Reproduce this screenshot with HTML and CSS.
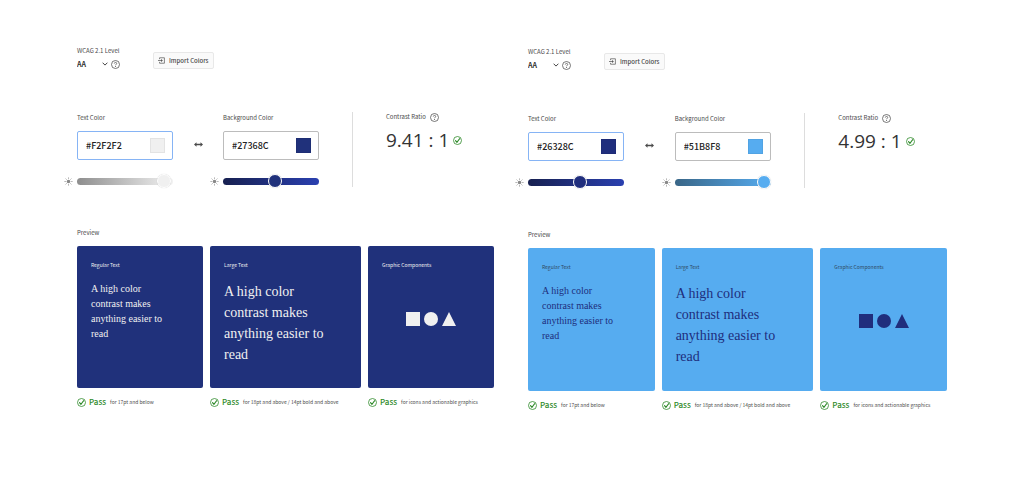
FILE: index.html
```html
<!DOCTYPE html>
<html lang="en">
<head>
<meta charset="utf-8">
<title>Contrast Checker</title>
<link rel="stylesheet" href="styles.css">
</head>
<body>
<svg class="sprite" aria-hidden="true">
  <symbol id="help" viewBox="0 0 18 18"><circle cx="9" cy="9" r="8" fill="none" stroke="currentColor" stroke-width="1.5"/><path d="M6.6 7.1C6.7 5.5 7.7 4.8 9 4.8c1.400 0 2.400.8 2.400 2 0 1.800-2.300 1.900-2.300 3.700" fill="none" stroke="currentColor" stroke-width="1.500"/><circle cx="9.100" cy="12.900" r="1" fill="currentColor"/></symbol>
  <symbol id="check" viewBox="0 0 18 18"><circle cx="9" cy="9" r="8" fill="none" stroke="currentColor" stroke-width="1.600"/><path d="M5 9.300l3 3.200 5.200-7" fill="none" stroke="currentColor" stroke-width="2.400" stroke-linecap="round" stroke-linejoin="round"/></symbol>
  <symbol id="sun" viewBox="0 0 18 18"><circle cx="9" cy="9" r="3.600" fill="currentColor"/><path d="M9 1v2.500M9 14.500V17M1 9h2.500M14.500 9H17M3.300 3.300l1.800 1.800M12.900 12.900l1.800 1.800M3.300 14.700l1.800-1.800M12.900 5.100l1.800-1.800" stroke="currentColor" stroke-width="1.600"/></symbol>
  <symbol id="swap" viewBox="0 0 18 10"><path d="M0 5l5-4.500V3.600h8V.5L18 5l-5 4.500V6.400H5v3.100z" fill="currentColor"/></symbol>
  <symbol id="import" viewBox="0 0 18 18"><path d="M4 5.500V2h12.500v14H4v-3.500" fill="none" stroke="currentColor" stroke-width="1.700"/><path d="M0 9h9" stroke="currentColor" stroke-width="1.800"/><path d="M8 5.300L12.300 9 8 12.700z" fill="currentColor"/></symbol>
  <symbol id="shapes" viewBox="0 0 50 14"><path d="M0 0h14v14H0zM43 0l7 14H36z" fill="currentColor"/><circle cx="25" cy="7" r="7" fill="currentColor"/></symbol>
</svg>

<main class="page">
  <section class="panel navy" aria-label="Navy background">
    <div class="toolbar">
      <div class="level">
        <label for="level-a">WCAG 2.1 Level</label>
        <div class="level-row">
          <select id="level-a"><option>AA</option><option>AAA</option></select>
          <button class="icon-button" aria-label="About levels"><svg class="help"><use href="#help"/></svg></button>
        </div>
      </div>
      <button class="import"><svg class="import-icon"><use href="#import"/></svg>Import Colors</button>
    </div>
    <div class="colors">
      <div class="picker">
        <label for="text-a">Text Color</label>
        <div class="field active"><input id="text-a" type="text" value="#F2F2F2"><button class="swatch text-fill" aria-label="Pick text color"></button></div>
        <div class="lightness"><svg class="sun"><use href="#sun"/></svg><input class="gray-track text-thumb" type="range" value="98" aria-label="Text lightness"></div>
      </div>
      <button class="icon-button swap" aria-label="Swap colors"><svg class="swap-icon"><use href="#swap"/></svg></button>
      <div class="picker">
        <label for="back-a">Background Color</label>
        <div class="field"><input id="back-a" type="text" value="#27368C"><button class="swatch back-fill" aria-label="Pick background color"></button></div>
        <div class="lightness"><svg class="sun"><use href="#sun"/></svg><input class="navy-track back-thumb" type="range" value="55" aria-label="Background lightness"></div>
      </div>
      <div class="ratio">
        <div class="ratio-title">Contrast Ratio <button class="icon-button" aria-label="About contrast ratio"><svg class="help"><use href="#help"/></svg></button></div>
        <div class="ratio-value">9.41 : 1 <svg class="check"><use href="#check"/></svg></div>
      </div>
    </div>
    <h2>Preview</h2>
    <div class="previews">
      <article><div class="tile"><h3>Regular Text</h3><p class="sample">A high color contrast makes anything easier to read</p></div>
        <div class="result"><svg class="check"><use href="#check"/></svg><strong>Pass</strong><span>for 17pt and below</span></div></article>
      <article><div class="tile"><h3>Large Text</h3><p class="sample large">A high color contrast makes anything easier to read</p></div>
        <div class="result"><svg class="check"><use href="#check"/></svg><strong>Pass</strong><span>for 18pt and above / 14pt bold and above</span></div></article>
      <article><div class="tile"><h3>Graphic Components</h3><svg class="shapes"><use href="#shapes"/></svg></div>
        <div class="result"><svg class="check"><use href="#check"/></svg><strong>Pass</strong><span>for icons and actionable graphics</span></div></article>
    </div>
  </section>

  <section class="panel sky" aria-label="Sky background">
    <div class="toolbar">
      <div class="level">
        <label for="level-b">WCAG 2.1 Level</label>
        <div class="level-row">
          <select id="level-b"><option>AA</option><option>AAA</option></select>
          <button class="icon-button" aria-label="About levels"><svg class="help"><use href="#help"/></svg></button>
        </div>
      </div>
      <button class="import"><svg class="import-icon"><use href="#import"/></svg>Import Colors</button>
    </div>
    <div class="colors">
      <div class="picker">
        <label for="text-b">Text Color</label>
        <div class="field active"><input id="text-b" type="text" value="#26328C"><button class="swatch text-fill" aria-label="Pick text color"></button></div>
        <div class="lightness"><svg class="sun"><use href="#sun"/></svg><input class="navy-track text-thumb" type="range" value="55" aria-label="Text lightness"></div>
      </div>
      <button class="icon-button swap" aria-label="Swap colors"><svg class="swap-icon"><use href="#swap"/></svg></button>
      <div class="picker">
        <label for="back-b">Background Color</label>
        <div class="field"><input id="back-b" type="text" value="#51B8F8"><button class="swatch back-fill" aria-label="Pick background color"></button></div>
        <div class="lightness"><svg class="sun"><use href="#sun"/></svg><input class="sky-track back-thumb" type="range" value="100" aria-label="Background lightness"></div>
      </div>
      <div class="ratio">
        <div class="ratio-title">Contrast Ratio <button class="icon-button" aria-label="About contrast ratio"><svg class="help"><use href="#help"/></svg></button></div>
        <div class="ratio-value">4.99 : 1 <svg class="check"><use href="#check"/></svg></div>
      </div>
    </div>
    <h2>Preview</h2>
    <div class="previews">
      <article><div class="tile"><h3>Regular Text</h3><p class="sample">A high color contrast makes anything easier to read</p></div>
        <div class="result"><svg class="check"><use href="#check"/></svg><strong>Pass</strong><span>for 17pt and below</span></div></article>
      <article><div class="tile"><h3>Large Text</h3><p class="sample large">A high color contrast makes anything easier to read</p></div>
        <div class="result"><svg class="check"><use href="#check"/></svg><strong>Pass</strong><span>for 18pt and above / 14pt bold and above</span></div></article>
      <article><div class="tile"><h3>Graphic Components</h3><svg class="shapes"><use href="#shapes"/></svg></div>
        <div class="result"><svg class="check"><use href="#check"/></svg><strong>Pass</strong><span>for icons and actionable graphics</span></div></article>
    </div>
  </section>
</main>
</body>
</html>
```
FILE: styles.css
```css
* { box-sizing: border-box; }
body { margin: 0; background: #fff; color: #4b4b4b; font: 6px/10px "Noto Sans CJK SC", "Open Sans", sans-serif; }
button, input, select { font: inherit; color: inherit; margin: 0; padding: 0; border: 0; background: none; }
h2, h3, p { margin: 0; font-weight: 400; font-size: inherit; }
svg { display: block; flex: none; }
.sprite { display: none; }

.page { display: grid; grid-template-columns: 430fr 432fr; gap: 21px; padding: 46px 77px 0 64px; }
.panel { min-width: 0; padding-left: 13px; }
.navy { --text: #f0f0f0; --back: #20317b; --label: #f0f0f0; }
.sky { --text: #202e7d; --back: #56acf0; --label: #2f4a63; padding-top: 1px; }

.toolbar { display: flex; gap: 33px; height: 66px; }
.level { width: 43px; white-space: nowrap; }
.level label { display: block; }
.level-row { display: flex; align-items: center; gap: 2px; margin-top: 3px; }
select { appearance: none; width: 32px; height: 10px; font-size: 7px; font-weight: 700; color: #333;
  background: url("data:image/svg+xml,%3Csvg xmlns='http://www.w3.org/2000/svg' viewBox='0 0 6 4'%3E%3Cpath d='M.6.7L3 3.100 5.400.7' fill='none' stroke='%23444'/%3E%3C/svg%3E") 25px center / 6px 4px no-repeat; }
.icon-button { display: block; line-height: 0; }
.help { width: 9px; height: 9px; }
.import { display: flex; align-items: center; gap: 4px; height: 17px; margin-top: 6px; padding: 0 4px; border: 1px solid #e8e8e8; border-radius: 2px; background: #fafafa; font-size: 6px; font-weight: 500; white-space: nowrap; }
.import-icon { width: 7px; height: 7px; }

.colors { display: grid; grid-template-columns: 96fr 50fr 96fr 33fr 142fr; }
.picker { min-width: 0; padding-top: 1px; }
.picker label { display: block; }
.swap { align-self: start; justify-self: center; margin-top: 30px; }
.swap-icon { width: 9px; height: 5px; }
.field { display: flex; align-items: center; height: 29px; margin-top: 8px; padding: 0 7px 0 8px; border: 1px solid #bcbcbc; border-radius: 2px; }
.field.active { border-color: #86b4f5; }
.field input { flex: 1; width: 0; min-width: 0; font-size: 9px; font-weight: 500; color: #222; outline: 0; }
.swatch { width: 15px; height: 15px; border: 1px solid #0000000d; }
.text-fill { background: var(--text); }
.back-fill { background: var(--back); }
.lightness { display: flex; align-items: center; gap: 4px; height: 14px; margin: 14px 0 0 -13px; }
.sun { width: 9px; height: 9px; color: #888; }
input[type="range"] { appearance: none; flex: 1; width: 0; min-width: 0; height: 7px; border-radius: 4px; }
input[type="range"]::-webkit-slider-thumb { appearance: none; width: 14px; height: 14px; border: 1px solid #fff; border-radius: 50%; background: var(--thumb); box-shadow: 0 0 1px #0003; }
.text-thumb { --thumb: var(--text); }
.back-thumb { --thumb: var(--back); }
.gray-track { background: linear-gradient(90deg, #8e8e8e, #f2f2f2); }
.navy-track { background: linear-gradient(90deg, #172050, #2a40b0); }
.sky-track { background: linear-gradient(90deg, #396687, #56acf0); }
.ratio { grid-column: 5; height: 75px; padding-left: 33px; border-left: 1px solid #ddd; }
.ratio-title { display: flex; align-items: center; gap: 4px; white-space: nowrap; }
.ratio-value { display: flex; align-items: center; gap: 4px; margin-top: 6px; font-family: "Open Sans", sans-serif; font-size: 19px; line-height: 24px; color: #333; white-space: nowrap; }
.check { width: 9px; height: 9px; color: #2f8a2a; }

h2 { margin: 40px 0 8px; }
.previews { display: grid; grid-template-columns: 126fr 151fr 126fr; gap: 7px; }
.previews article { min-width: 0; }
.tile { height: 142px; padding: 14px; border-radius: 2px; background: var(--back); color: var(--text); }
.sky h2 { margin-top: 41px; }
.sky .tile { height: 143px; }
.tile h3 { font-size: 5px; color: var(--label); }
.sample { max-width: 8em; margin-top: 11px; font: 10px/15px "Liberation Serif", serif; }
.sample.large { font-size: 14px; line-height: 21px; }
.shapes { width: 50px; height: 14px; margin: 42px auto 0; }
.result { display: flex; align-items: center; height: 12px; margin-top: 8px; white-space: nowrap; font-size: 5px; }
.result strong { margin: 0 4px 0 3px; font-size: 8px; font-weight: 500; color: #2f8a2a; }
```
